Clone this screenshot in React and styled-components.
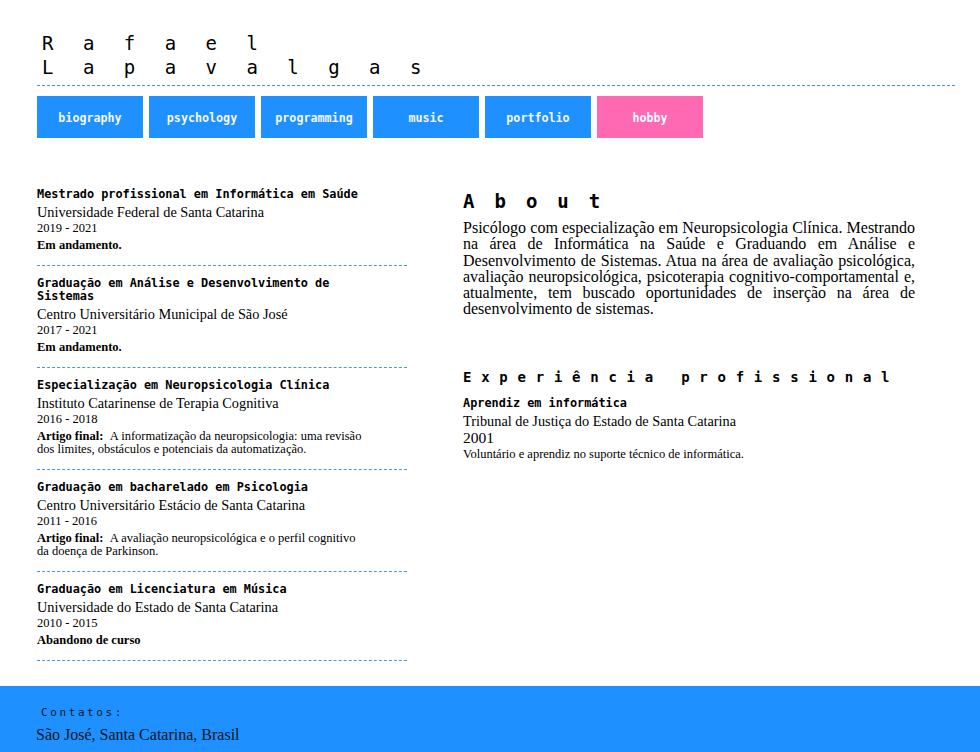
import React from "react";
import styled, { createGlobalStyle } from "styled-components";

const Global = createGlobalStyle`
  html, body { margin: 0; padding: 0; background: #fff; }
  body { font-family: "Liberation Serif", "Times New Roman", serif; color: #000; }
`;

const mono = `"DejaVu Sans Mono", "Liberation Mono", monospace`;

const Page = styled.div`
  display: flex;
  flex-direction: column;
`;

const Header = styled.header`
  margin: 0 25px 0 37px;
  padding-top: 31px;
`;

const Title = styled.h1`
  margin: 0;
  padding: 0 0 6px 5px;
  font-family: ${mono};
  font-weight: normal;
  font-size: 19px;
  line-height: 24px;
  letter-spacing: 29.45px;
  border-bottom: 1px dashed #4a90cf;
  span { display: block; }
`;

const Nav = styled.nav`
  display: flex;
  gap: 6px;
  margin: 10px 0 0 0;
`;

const NavButton = styled.a`
  display: flex;
  align-items: center;
  justify-content: center;
  width: 106px;
  height: 42px;
  padding-top: 1px;
  box-sizing: border-box;
  background: ${(p) => (p.$active ? "#ff69b4" : "#1e90ff")};
  color: #f4f8ff;
  font-family: ${mono};
  font-weight: bold;
  font-size: 11.7px;
  text-decoration: none;
`;

const Main = styled.main`
  display: grid;
  grid-template-columns: 370px 452px;
  column-gap: 56px;
  padding: 39px 0 0 37px;
  align-items: start;
`;

const Education = styled.section`
  display: flex;
  flex-direction: column;
`;

const Entry = styled.article`
  padding: 11px 0 13px;
  border-bottom: 1px dashed #4a9acb;
`;

const EntryTitle = styled.h3`
  margin: 0 0 3px;
  width: ${(p) => p.$width || "auto"};
  font-family: ${mono};
  font-weight: bold;
  font-size: 11.85px;
  line-height: 13px;
`;

const Institution = styled.div`
  font-size: 14.3px;
  line-height: 17px;
`;

const Years = styled.div`
  font-size: 12.5px;
  line-height: 15px;
`;

const Note = styled.p`
  margin: 3px 0 0;
  width: 90%;
  font-size: 12.5px;
  line-height: 13px;
`;

const NoteLabel = styled.b`
  font-weight: bold;
  margin-right: 4px;
`;

const Side = styled.section`
  padding-top: 12px;
  display: flex;
  flex-direction: column;
`;

const SideHeading = styled.h2`
  margin: ${(p) => p.$mt || 0}px 0 0;
  font-family: ${mono};
  font-weight: bold;
  font-size: ${(p) => p.$size}px;
  line-height: ${(p) => p.$lh}px;
  letter-spacing: ${(p) => p.$ls}px;
`;

const AboutText = styled.p`
  margin: 7px 0 0;
  font-size: 16px;
  line-height: 16.3px;
  text-align: justify;
`;

const Job = styled.div`
  margin-top: 11px;
`;

const JobYear = styled.div`
  font-size: 15.5px;
  line-height: 16px;
`;

const JobNote = styled.div`
  font-size: 12.5px;
  line-height: 17px;
`;

const Footer = styled.footer`
  margin-top: 25px;
  background: #1e90ff;
  padding: 19px 0 24px 36px;
  color: #0d1422;
`;

const FooterLabel = styled.div`
  font-family: ${mono};
  font-size: 11px;
  line-height: 15px;
  letter-spacing: 2.6px;
  padding-left: 5px;
`;

const FooterText = styled.div`
  margin-top: 6px;
  font-size: 16px;
  line-height: 18px;
`;

const navItems = ["biography", "psychology", "programming", "music", "portfolio", "hobby"];

const education = [
  {
    title: "Mestrado profissional em Informática em Saúde",
    inst: "Universidade Federal de Santa Catarina",
    years: "2019 - 2021",
    status: "Em andamento.",
  },
  {
    title: "Graduação em Análise e Desenvolvimento de Sistemas",
    inst: "Centro Universitário Municipal de São José",
    years: "2017 - 2021",
    status: "Em andamento.",
  },
  {
    title: "Especialização em Neuropsicologia Clínica",
    inst: "Instituto Catarinense de Terapia Cognitiva",
    years: "2016 - 2018",
    article:
      "A informatização da neuropsicologia: uma revisão dos limites, obstáculos e potenciais da automatização.",
  },
  {
    title: "Graduação em bacharelado em Psicologia",
    inst: "Centro Universitário Estácio de Santa Catarina",
    years: "2011 - 2016",
    article: "A avaliação neuropsicológica e o perfil cognitivo da doença de Parkinson.",
  },
  {
    title: "Graduação em Licenciatura em Música",
    inst: "Universidade do Estado de Santa Catarina",
    years: "2010 - 2015",
    status: "Abandono de curso",
  },
];

export default function App() {
  return (
    <Page>
      <Global />
      <Header>
        <Title>
          <span>Rafael</span>
          <span>Lapavalgas</span>
        </Title>
        <Nav>
          {navItems.map((n) => (
            <NavButton key={n} href="#" $active={n === "hobby"}>
              {n}
            </NavButton>
          ))}
        </Nav>
      </Header>
      <Main>
        <Education>
          {education.map((e) => (
            <Entry key={e.title}>
              <EntryTitle $width="90%">{e.title}</EntryTitle>
              <Institution>{e.inst}</Institution>
              <Years>{e.years}</Years>
              <Note>
                {e.status ? (
                  <b>{e.status}</b>
                ) : (
                  <>
                    <NoteLabel>Artigo final:</NoteLabel> {e.article}
                  </>
                )}
              </Note>
            </Entry>
          ))}
        </Education>
        <Side>
          <SideHeading $size={19} $lh={24} $ls={20}>
            About
          </SideHeading>
          <AboutText>
            Psicólogo com especialização em Neuropsicologia Clínica. Mestrando na área de
            Informática na Saúde e Graduando em Análise e Desenvolvimento de Sistemas. Atua na
            área de avaliação psicológica, avaliação neuropsicológica, psicoterapia
            cognitivo-comportamental e, atualmente, tem buscado oportunidades de inserção na área
            de desenvolvimento de sistemas.
          </AboutText>
          <SideHeading $size={14} $lh={18} $ls={9.75} $mt={50}>
            Experiência profissional
          </SideHeading>
          <Job>
            <EntryTitle>Aprendiz em informática</EntryTitle>
            <Institution>Tribunal de Justiça do Estado de Santa Catarina</Institution>
            <JobYear>2001</JobYear>
            <JobNote>Voluntário e aprendiz no suporte técnico de informática.</JobNote>
          </Job>
        </Side>
      </Main>
      <Footer>
        <FooterLabel>Contatos:</FooterLabel>
        <FooterText>São José, Santa Catarina, Brasil</FooterText>
      </Footer>
    </Page>
  );
}
